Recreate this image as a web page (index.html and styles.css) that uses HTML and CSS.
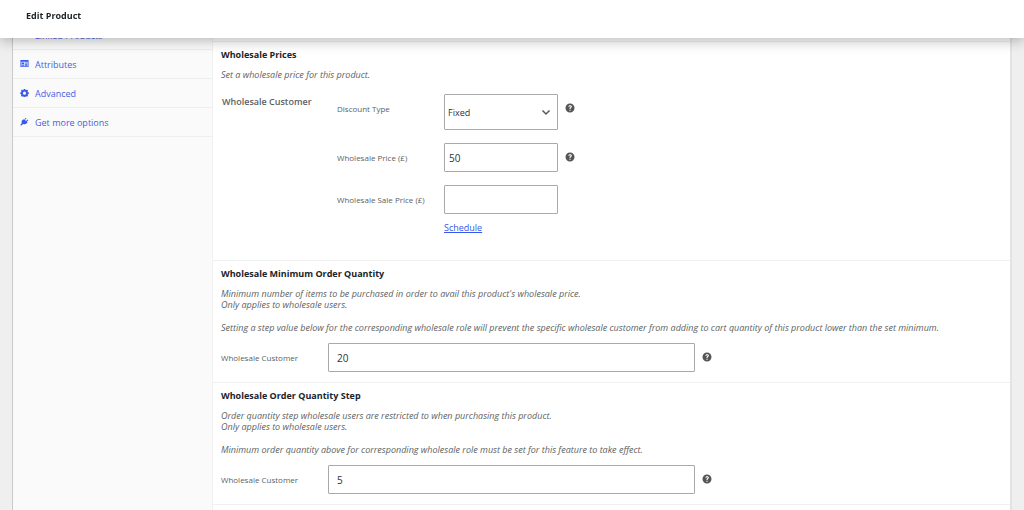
FILE: index.html
```html
<!DOCTYPE html>
<html lang="en">
<head>
    <meta charset="UTF-8">
    <meta name="viewport" content="width=device-width, initial-scale=1.0">
    <title>Edit Product</title>
    <link rel="stylesheet" href="styles.css">
</head>
<body>
    <svg class="sprite" aria-hidden="true">
        <symbol id="icon-help" viewBox="0 0 20 20">
            <path fill-rule="evenodd" d="M10 1a9 9 0 1 0 0 18a9 9 0 0 0 0-18zM6.500 7.400C6.700 5.400 8 4.300 10.200 4.300c2.200 0 3.600 1.100 3.600 2.800c0 1.400-.7 2.100-1.700 2.800c-.9.600-1 .9-1 1.900H8.900c0-1.600.5-2.400 1.500-3.100c.8-.5 1-.8 1-1.400c0-.7-.5-1-1.200-1c-.9 0-1.300.4-1.400 1.100zM8.800 13.300h2.400v2.400H8.800z"/>
        </symbol>
    </svg>

    <header class="top-bar">
        <h1>Edit Product</h1>
    </header>

    <main class="product-data">
        <nav class="tabs">
            <a href="#linked">
                <svg viewBox="0 0 20 20"><path d="M3 8h8v4H3zM11 8h6v4h-6z"/></svg>
                Linked Products
            </a>
            <a href="#attributes">
                <svg viewBox="0 0 20 20"><path fill-rule="evenodd" d="M1 2h18v16H1zM3 6v10h14V6zM4 8h5v3H4zM4 12h5v3H4zM10.500 8H16v2h-5.500zM10.500 11H16v1.500h-5.500zM10.500 13.500H16V15h-5.500z"/></svg>
                Attributes
            </a>
            <a href="#advanced">
                <svg viewBox="0 0 20 20"><path fill-rule="evenodd" d="M8.300 2h3.400l.5 2.200 1.500.6 1.900-1.200 2.400 2.400-1.200 1.900.6 1.500 2.200.5v3.300l-2.200.5-.6 1.500 1.200 1.900-2.400 2.400-1.900-1.200-1.500.6-.5 2.100H8.300l-.5-2.100-1.500-.6-1.900 1.200L2 17.100l1.200-1.900-.6-1.500-2.100-.5V9.900l2.100-.5.600-1.500L2 6l2.400-2.400 1.900 1.200 1.500-.6zM10 8a3.500 3.500 0 1 0 0 7a3.500 3.500 0 0 0 0-7z"/></svg>
                Advanced
            </a>
            <a href="#more">
                <svg viewBox="0 0 20 20"><path d="M12.600 1.600l1.700 1.600-3.400 3.400 2.500 2.500 3.400-3.400 1.700 1.700-3.400 3.400 1.600 1.600c-3 3.400-6.300 5-10 3.200L3 19H1v-2l3-3.500C2.300 9.800 4.500 6.500 7.700 5l1.500 1.500z"/></svg>
                Get more options
            </a>
        </nav>

        <div class="panel">
            <section class="group">
                <h2>Wholesale Prices</h2>
                <p>Set a wholesale price for this product.</p>
                <div class="prices">
                    <h3>Wholesale Customer</h3>
                    <div class="fields">
                        <div class="field">
                            <label for="discountType">Discount Type</label>
                            <div class="select">
                                <select id="discountType">
                                    <option selected>Fixed</option>
                                    <option>Percentage</option>
                                </select>
                                <svg viewBox="0 0 20 20"><path d="M3 7l7 7 7-7"/></svg>
                            </div>
                            <svg class="help"><use href="#icon-help"/></svg>
                        </div>
                        <div class="field">
                            <label for="price">Wholesale Price (£)</label>
                            <input id="price" type="text" value="50">
                            <svg class="help"><use href="#icon-help"/></svg>
                        </div>
                        <div class="field">
                            <label for="salePrice">Wholesale Sale Price (£)</label>
                            <div class="sale">
                                <input id="salePrice" type="text">
                                <a href="#schedule">Schedule</a>
                            </div>
                        </div>
                    </div>
                </div>
            </section>

            <section class="group">
                <h2>Wholesale Minimum Order Quantity</h2>
                <p>Minimum number of items to be purchased in order to avail this product's wholesale price.<br>Only applies to wholesale users.</p>
                <p>Setting a step value below for the corresponding wholesale role will prevent the specific wholesale customer from adding to cart quantity of this product lower than the set minimum.</p>
                <div class="field wide">
                    <label for="minQty">Wholesale Customer</label>
                    <input id="minQty" type="text" value="20">
                    <svg class="help"><use href="#icon-help"/></svg>
                </div>
            </section>

            <section class="group">
                <h2>Wholesale Order Quantity Step</h2>
                <p>Order quantity step wholesale users are restricted to when purchasing this product.<br>Only applies to wholesale users.</p>
                <p>Minimum order quantity above for corresponding wholesale role must be set for this feature to take effect.</p>
                <div class="field wide">
                    <label for="stepQty">Wholesale Customer</label>
                    <input id="stepQty" type="text" value="5">
                    <svg class="help"><use href="#icon-help"/></svg>
                </div>
            </section>
        </div>
    </main>
</body>
</html>
```
FILE: styles.css
```css
* {
    box-sizing: border-box;
}
body {
    margin: 0;
    padding: 20px 12px 0;
    min-height: 100vh;
    display: flex;
    background-color: #efefef;
    font-family: "Open Sans", "Noto Sans", sans-serif;
    font-size: 9px;
    color: #5c5f63;
}
h1, h2, h3, p {
    margin: 0;
}
.sprite {
    position: absolute;
    width: 0;
    height: 0;
}
.top-bar {
    position: fixed;
    z-index: 1;
    top: 0;
    left: 0;
    right: 0;
    height: 38px;
    padding: 8px 26px;
    background-color: #fff;
    box-shadow: 0 2px 14px rgba(0, 0, 0, 0.3);
}
.top-bar h1 {
    font-size: 9px;
    line-height: 16px;
    font-weight: 700;
    color: #1d2327;
}
.product-data {
    flex: 1;
    display: flex;
    min-width: 0;
    background-color: #fff;
    border: 1px solid #c9cacc;
    border-right: 2px solid #e2e3e4;
    border-bottom: 0;
}
.tabs {
    flex: none;
    width: 200px;
    background-color: #fafafa;
    border-right: 1px solid #f0f0f0;
}
.tabs a {
    display: flex;
    gap: 6px;
    height: 29px;
    padding-left: 7px;
    border-bottom: 1px solid #eee;
    line-height: 30px;
    color: #4560e6;
    text-decoration: none;
}
.tabs svg {
    width: 9px;
    height: 9px;
    margin-top: 9px;
    fill: #3858e9;
}
.panel {
    flex: 1;
    min-width: 0;
    padding-top: 20px;
}
.group {
    padding: 7px 8px 10px;
    border-top: 1px solid #f0f0f0;
}
.group:first-child {
    padding-bottom: 25px;
}
.group:last-child {
    border-bottom: 1px solid #f0f0f0;
}
.group h2 {
    margin-bottom: 8px;
    font-size: 9px;
    line-height: 12px;
    font-weight: 700;
    color: #1d2327;
}
.group p {
    line-height: 11px;
    font-style: italic;
}
.group p + p {
    margin-top: 12px;
}
.prices {
    display: flex;
    margin-top: 14px;
}
.prices h3 {
    width: 116px;
    padding-left: 1px;
    font-size: 9px;
    line-height: 16px;
    font-weight: 600;
}
.fields {
    display: flex;
    flex-direction: column;
    gap: 13px;
}
.field {
    display: flex;
    align-items: flex-start;
}
.field label {
    width: 107px;
    font-size: 8px;
    line-height: 29px;
}
input, select {
    width: 114px;
    height: 29px;
    margin: 0;
    padding: 0 4px;
    border: 1px solid #a7aaad;
    border-radius: 1px;
    background-color: #fff;
    font-family: inherit;
    font-size: 10px;
    color: #2c3338;
}
select {
    height: 36px;
    padding: 0 3px;
    font-size: 9px;
    appearance: none;
}
.select {
    display: grid;
    align-items: center;
}
.select select,
.select svg {
    grid-area: 1 / 1;
}
.select svg {
    justify-self: end;
    width: 10px;
    height: 10px;
    margin-right: 7px;
    fill: none;
    stroke: #50575e;
    stroke-width: 3;
    pointer-events: none;
}
.help {
    width: 10px;
    height: 10px;
    margin: 9px 0 0 7px;
    fill: #555;
}
.sale {
    display: flex;
    flex-direction: column;
    align-items: flex-start;
    gap: 7px;
}
.sale a {
    line-height: 14px;
    color: #3858e9;
}
.wide {
    margin-top: 10px;
}
.wide input {
    width: 47%;
    padding: 0 8px;
}
```
